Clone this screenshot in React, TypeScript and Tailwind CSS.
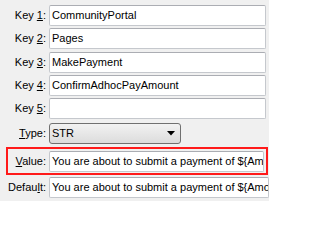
import React from "react";

const font = { fontFamily: '"Liberation Sans", Arial, sans-serif' };

function Label({ pre, u, post, w = "w-[46px]" }: { pre: string; u: string; post: string; w?: string }) {
  return (
    <div className={`${w} shrink-0 text-right text-[11px] leading-none text-black`}>
      {pre}
      <span className="underline underline-offset-[1px]">{u}</span>
      {post}
    </div>
  );
}

function Field({ value, className = "" }: { value: string; className?: string }) {
  return (
    <div
      className={`h-[21px] flex items-center overflow-hidden whitespace-nowrap bg-white border border-[#c5c8cd] border-t-[#abadb3] rounded-[2px] pl-[2px] text-[11px] text-black ${className}`}
    >
      {value}
    </div>
  );
}

export default function App() {
  const keys = ["CommunityPortal", "Pages", "MakePayment", "ConfirmAdhocPayAmount", ""];
  const tops = ["mt-[5px]", "mt-[2px]", "mt-[3px]", "mt-[2px]", "mt-[2px]"];
  const msg = "You are about to submit a payment of ${AmountToPay}";
  return (
    <div className="w-[269px] h-[201px] bg-[#f0f0f0] overflow-hidden" style={font}>
      {keys.map((k, i) => (
        <div key={i} className={`flex items-center ${tops[i]}`}>
          <Label pre="Key " u={String(i + 1)} post=":" />
          <Field value={k} className="ml-[3px] w-[217px]" />
        </div>
      ))}
      <div className="flex items-center mt-[4px]">
        <Label pre="" u="T" post="ype:" />
        <div className="ml-[3px] w-[132px] h-[21px] flex items-center justify-between rounded-[3px] border border-[#707070] bg-gradient-to-b from-[#f2f2f2] to-[#dcdcdc] pl-[2px] pr-[5px] text-[11px] text-black">
          <span>STR</span>
          <svg width="8" height="5" viewBox="0 0 8 5">
            <path d="M0 0H8L4 4.5Z" fill="#000" />
          </svg>
        </div>
      </div>
      <div className="ml-[6px] mt-[3px] w-[262px] h-[28px] border-2 border-[#ff1a1a] flex items-center">
        <Label pre="" u="V" post="alue:" w="w-[38px]" />
        <Field value={msg} className="ml-[3px] w-[215px]" />
      </div>
      <div className="flex items-center mt-[2px]">
        <Label pre="Defau" u="l" post="t:" />
        <Field value={msg} className="ml-[3px] w-[222px]" />
      </div>
    </div>
  );
}
